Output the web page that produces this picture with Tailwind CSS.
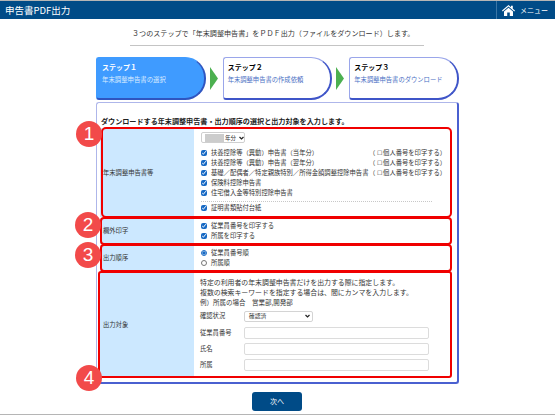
<!DOCTYPE html>
<html lang="ja">
<head>
<meta charset="utf-8">
<script src="https://cdn.jsdelivr.net/npm/@tailwindcss/browser@4"></script>
</head>
<body class="bg-white">
<div class="relative w-[555px] h-[415px] overflow-hidden flex flex-col text-[#333] text-[6.3px] leading-[10px] font-['Noto_Sans_CJK_JP','Noto_Sans',sans-serif]">
  <header class="h-[19px] shrink-0 bg-[#004b87] border-t border-t-[#b5b5b5] flex items-center justify-between text-white">
    <h1 class="ml-[5px] text-[9.5px] font-normal">申告書PDF出力</h1>
    <div class="h-full w-[59px] border-l border-l-[#3a76a6] flex items-center gap-[5px] pl-[5px]">
      <svg class="w-[13px] h-[11px]" viewBox="0 0 13 11"><path fill="#fff" d="M6.5 0 0 5.6l.7.8L6.5 1.6l5.8 4.8.7-.8L10.8 3.7V.8H9v1.4zM2 6.4V11h3.2V7.6h2.6V11H11V6.4L6.5 2.7z"/></svg>
      <span class="text-[7px]">メニュー</span>
    </div>
  </header>

  <p class="mt-[9px] ml-[132px] text-[7.08px] leading-[10px] whitespace-nowrap">３つのステップで「年末調整申告書」をＰＤＦ出力（ファイルをダウンロード）します。</p>
  <div class="mt-[7px] ml-[130px] w-[294px] h-px bg-[#c4c4c4]"></div>

  <div class="mt-[11px] ml-[96px] w-[363px] h-[43px] flex items-center">
    <div class="w-[110px] h-full rounded-l-[3px] rounded-r-[21px] bg-[#3f9bff] border border-[#3f9bff] border-r-2 border-b-2 border-r-[#2f55c0] border-b-[#2f55c0] pl-[5px] pt-[4px] text-white">
      <p class="text-[7px] font-bold leading-[10px]">ステップ１</p>
      <p class="mt-[3px] text-[6.4px] leading-[10px] text-[#dcecff]">年末調整申告書の選択</p>
    </div>
    <svg class="ml-[4px] w-[9px] h-[23px]" viewBox="0 0 9 23"><path fill="#4cb050" d="M0 0 8 11.5 0 23z"/></svg>
    <div class="ml-[4px] w-[110px] h-full rounded-l-[3px] rounded-r-[21px] bg-white border border-[#9aa6ea] border-r-2 border-b-2 border-r-[#3f55c8] border-b-[#3f55c8] pl-[4px] pt-[4px]">
      <p class="text-[7px] font-bold leading-[10px] text-black">ステップ２</p>
      <p class="mt-[3px] text-[6.3px] leading-[10px] text-[#4a6fc4] whitespace-nowrap">年末調整申告書の作成依頼</p>
    </div>
    <svg class="ml-[4px] w-[8px] h-[23px]" viewBox="0 0 8 23"><path fill="#4cb050" d="M0 0 8 11.5 0 23z"/></svg>
    <div class="ml-[5px] w-[110px] h-full rounded-l-[3px] rounded-r-[21px] bg-white border border-[#9aa6ea] border-r-2 border-b-2 border-r-[#3f55c8] border-b-[#3f55c8] pl-[4px] pt-[4px]">
      <p class="text-[7px] font-bold leading-[10px] text-black">ステップ３</p>
      <p class="mt-[3px] text-[6.3px] leading-[10px] text-[#4a6fc4] whitespace-nowrap">年末調整申告書のダウンロード</p>
    </div>
  </div>

  <main class="mt-[2px] ml-[96px] w-[363px] h-[282px] rounded-[3px] border border-[#aeb6ea] border-r-2 border-b-2 border-r-[#4a60d0] border-b-[#4a60d0] pl-[3px] pt-[13px]">
    <h2 class="ml-[1px] text-[7.1px] font-bold leading-[10px] text-[#222] whitespace-nowrap">ダウンロードする年末調整申告書・出力順序の選択と出力対象を入力します。</h2>

    <div class="mt-[2px] w-[353px] flex flex-col">
      <section class="flex h-[89px]">
        <div class="w-[94px] bg-[#cce8ff] pl-[3px] flex items-center">年末調整申告書等</div>
        <div class="flex-1 pl-[7px] pt-[4px]">
          <div class="w-[44px] h-[11px] rounded-[2px] border border-[#cfcfcf] flex items-center pl-[3px]">
            <span class="w-[19px] h-[8px] bg-[#cccccc]"></span><span class="ml-px text-[5.5px]">年分</span>
            <svg class="ml-[3px] w-[5px] h-[4px]" viewBox="0 0 5 4"><path fill="none" stroke="#222" stroke-width="1.2" d="M.5 1 2.5 3 4.5 1"/></svg>
          </div>
          <div class="mt-[5px] flex flex-col">
            <label class="h-[10px] flex items-center"><input type="checkbox" checked class="w-[6px] h-[6px] m-0 accent-[#1769c4]"><span class="ml-[4px] w-[158px]">扶養控除等（異動）申告書（当年分）</span><span class="whitespace-nowrap">（ ☐ 個人番号を印字する）</span></label>
            <label class="h-[10px] flex items-center"><input type="checkbox" checked class="w-[6px] h-[6px] m-0 accent-[#1769c4]"><span class="ml-[4px] w-[158px]">扶養控除等（異動）申告書（翌年分）</span><span class="whitespace-nowrap">（ ☐ 個人番号を印字する）</span></label>
            <label class="h-[10px] flex items-center"><input type="checkbox" checked class="w-[6px] h-[6px] m-0 accent-[#1769c4]"><span class="ml-[4px] w-[158px] whitespace-nowrap">基礎／配偶者／特定親族特別／所得金額調整控除申告書</span><span class="whitespace-nowrap">（ ☐ 個人番号を印字する）</span></label>
            <label class="h-[10px] flex items-center"><input type="checkbox" checked class="w-[6px] h-[6px] m-0 accent-[#1769c4]"><span class="ml-[4px]">保険料控除申告書</span></label>
            <label class="h-[10px] flex items-center"><input type="checkbox" checked class="w-[6px] h-[6px] m-0 accent-[#1769c4]"><span class="ml-[4px]">住宅借入金等特別控除申告書</span></label>
          </div>
          <div class="mt-[3px] w-[231px] border-t border-dotted border-t-[#c8c8c8]"></div>
          <label class="mt-[1px] h-[10px] flex items-center"><input type="checkbox" checked class="w-[6px] h-[6px] m-0 accent-[#1769c4]"><span class="ml-[4px]">証明書類貼付台紙</span></label>
        </div>
      </section>
      <section class="flex h-[26px] mt-px">
        <div class="w-[94px] bg-[#cce8ff] pl-[3px] flex items-center">欄外印字</div>
        <div class="flex-1 pl-[7px] pt-[3px]">
          <label class="h-[10px] flex items-center"><input type="checkbox" checked class="w-[6px] h-[6px] m-0 accent-[#1769c4]"><span class="ml-[4px]">従業員番号を印字する</span></label>
          <label class="h-[10px] flex items-center"><input type="checkbox" checked class="w-[6px] h-[6px] m-0 accent-[#1769c4]"><span class="ml-[4px]">所属を印字する</span></label>
        </div>
      </section>
      <section class="flex h-[26px] mt-px">
        <div class="w-[94px] bg-[#cce8ff] pl-[3px] flex items-center">出力順序</div>
        <div class="flex-1 pl-[7px] pt-[3px]">
          <label class="h-[10px] flex items-center"><input type="radio" name="o" checked class="w-[6px] h-[6px] m-0 accent-[#1769c4]"><span class="ml-[4px]">従業員番号順</span></label>
          <label class="h-[10px] flex items-center"><input type="radio" name="o" class="w-[6px] h-[6px] m-0"><span class="ml-[4px]">所属順</span></label>
        </div>
      </section>
      <section class="flex h-[105px] mt-px">
        <div class="w-[94px] bg-[#cce8ff] pl-[3px] flex items-center">出力対象</div>
        <div class="flex-1 pl-[6px] pt-[5px]">
          <p class="text-[6.9px] whitespace-nowrap">特定の利用者の年末調整申告書だけを出力する際に指定します。</p>
          <p class="text-[6.9px] whitespace-nowrap">複数の検索キーワードを指定する場合は、間にカンマを入力します。</p>
          <p class="text-[6.5px] whitespace-nowrap">例）所属の場合　営業部,開発部</p>
          <div class="mt-[3px] flex items-center h-[12px]">
            <span class="w-[44px]">確認状況</span>
            <div class="w-[69px] h-[11px] rounded-[2px] border border-[#d4d4d4] flex items-center justify-between pl-[4px] pr-[2px] text-[5.8px]">確認済
              <svg class="w-[5px] h-[4px]" viewBox="0 0 5 4"><path fill="none" stroke="#222" stroke-width="1.2" d="M.5 1 2.5 3 4.5 1"/></svg>
            </div>
          </div>
          <div class="mt-[5px] flex items-center h-[12px]"><span class="w-[44px]">従業員番号</span><div class="w-[185px] h-[12px] rounded-[2px] border border-[#dcdcdc]"></div></div>
          <div class="mt-[4px] flex items-center h-[12px]"><span class="w-[44px]">氏名</span><div class="w-[185px] h-[12px] rounded-[2px] border border-[#dcdcdc]"></div></div>
          <div class="mt-[4px] flex items-center h-[12px]"><span class="w-[44px]">所属</span><div class="w-[185px] h-[12px] rounded-[2px] border border-[#dcdcdc]"></div></div>
        </div>
      </section>
    </div>
  </main>

  <button class="mt-[8px] ml-[252px] w-[50px] h-[19px] rounded-[3px] bg-[#004b87] text-white text-[7px] leading-[19px]">次へ</button>

  <div class="absolute left-0 right-0 bottom-0 h-px bg-[#b5b5b5]"></div>

  <!-- annotation overlays -->
  <div class="absolute left-[101px] top-[127px] w-[351px] h-[91px] rounded-[5px] border-[2px] border-[#f00000]"></div>
  <div class="absolute left-[100px] top-[217px] w-[352px] h-[28px] rounded-[4px] border-[2px] border-[#f00000]"></div>
  <div class="absolute left-[100px] top-[244px] w-[352px] h-[28px] rounded-[4px] border-[2px] border-[#f00000]"></div>
  <div class="absolute left-[98px] top-[271px] w-[354px] h-[107px] rounded-[3px] border-[2px] border-[#f00000]"></div>

  <div class="absolute left-[76px] top-[121px] w-[26px] h-[26px] rounded-full bg-[#f24a4a] text-white text-[19px] leading-[26px] text-center font-['Liberation_Sans',sans-serif]">1</div>
  <div class="absolute left-[75px] top-[212px] w-[26px] h-[26px] rounded-full bg-[#f24a4a] text-white text-[19px] leading-[26px] text-center font-['Liberation_Sans',sans-serif]">2</div>
  <div class="absolute left-[75px] top-[242px] w-[26px] h-[26px] rounded-full bg-[#f24a4a] text-white text-[19px] leading-[26px] text-center font-['Liberation_Sans',sans-serif]">3</div>
  <div class="absolute left-[76px] top-[365px] w-[26px] h-[26px] rounded-full bg-[#f24a4a] text-white text-[19px] leading-[26px] text-center font-['Liberation_Sans',sans-serif]">4</div>
</div>
</body>
</html>
